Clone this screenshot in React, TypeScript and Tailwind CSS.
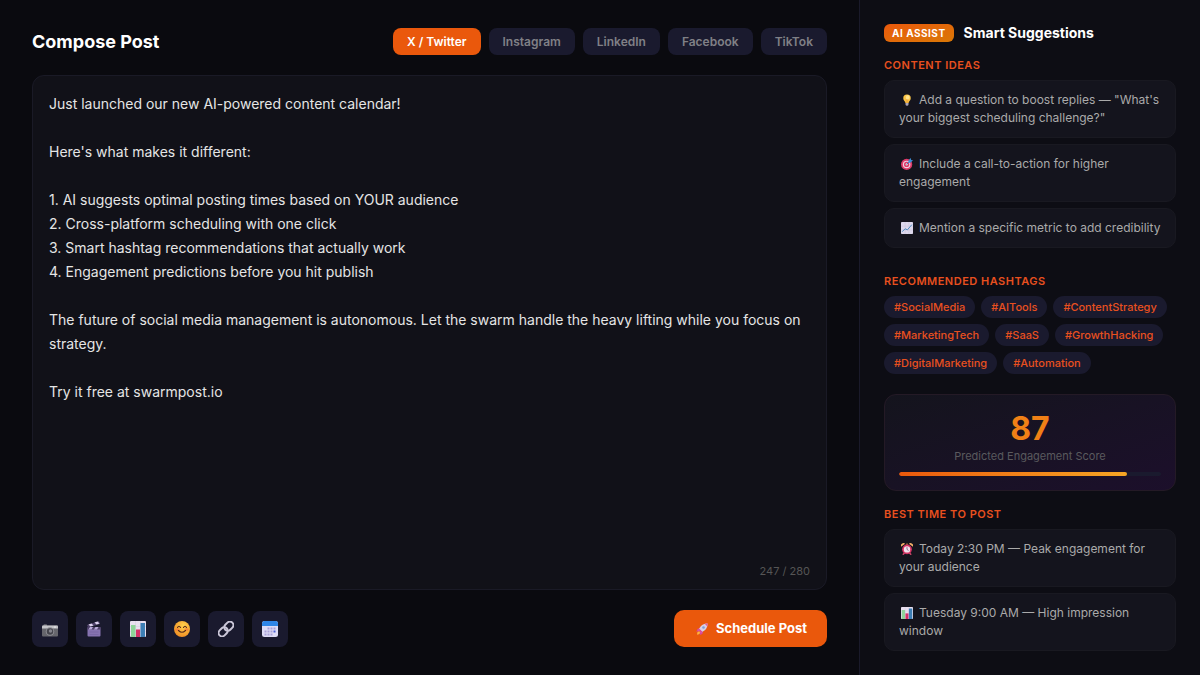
import React, { useState } from "react";
import clsx from "clsx";

interface IIconProps {
    className?: string
}

const CameraIcon: React.FC<IIconProps> = ({ className }) => (
    <svg viewBox="0 0 32 32" className={className} aria-hidden="true">
        <rect x="3" y="7" width="7" height="4" rx="1" fill="#8b8b92" />
        <rect x="0" y="9" width="32" height="22" rx="2" fill="#66666c" />
        <path d="M0 11a2 2 0 0 1 2-2h28a2 2 0 0 1 2 2v4H0z" fill="#c4c4c8" />
        <circle cx="16" cy="21" r="8.5" fill="#8f8f95" />
        <circle cx="16" cy="21" r="6.5" fill="#45454c" />
        <circle cx="17" cy="20" r="3.4" fill="#85858d" />
        <rect x="24" y="11" width="4" height="2" rx="1" fill="#f2f2f5" />
    </svg>
);

const ClapperIcon: React.FC<IIconProps> = ({ className }) => (
    <svg viewBox="0 0 32 32" className={className} aria-hidden="true">
        <rect x="3" y="12" width="26" height="19" rx="2" fill="#8673b0" />
        <rect x="3" y="12" width="26" height="5" fill="#4e4169" />
        <path d="M8 12h6l-3 5H5zM19 12h6l-3 5h-6z" fill="#b9aad8" />
        <path d="M2 8 26 0l2 6L4 13z" fill="#4e4169" />
        <path d="m5 7 6-2 4 4-6 2zM17 3l6-2 4 4-6 2z" fill="#ddd3f0" />
        <path d="M7 22h18M7 27h18" stroke="#7563a0" strokeWidth="1.4" />
    </svg>
);

const BarsIcon: React.FC<IIconProps> = ({ className }) => (
    <svg viewBox="0 0 32 32" className={className} aria-hidden="true">
        <rect x="0" y="0" width="32" height="32" rx="2" fill="#e9e0f0" />
        <path d="M0 11h32M0 21h32M11 0v32M21 0v32" stroke="#d3cadf" strokeWidth="1" />
        <rect x="2" y="8" width="9" height="24" fill="#8fd49a" />
        <rect x="12" y="17" width="8" height="15" fill="#d52f68" />
        <rect x="21" y="4" width="9" height="28" fill="#3d7fb5" />
    </svg>
);

const SmileIcon: React.FC<IIconProps> = ({ className }) => (
    <svg viewBox="0 0 32 32" className={className} aria-hidden="true">
        <defs>
            <radialGradient id="smile" cx="0.6" cy="0.3" r="0.75">
                <stop offset="0" stopColor="#ffd24d" />
                <stop offset="1" stopColor="#ef8b22" />
            </radialGradient>
        </defs>
        <circle cx="16" cy="16" r="16" fill="url(#smile)" />
        <ellipse cx="7" cy="17" rx="4" ry="3" fill="#f4703a" opacity=".6" />
        <ellipse cx="25" cy="17" rx="4" ry="3" fill="#f4703a" opacity=".6" />
        <path d="M7 13q3-5 6 0M19 13q3-5 6 0M9 19q7 7 14 0" fill="none" stroke="#57291a" strokeWidth="2.2" strokeLinecap="round" />
    </svg>
);

const LinkIcon: React.FC<IIconProps> = ({ className }) => (
    <svg viewBox="0 0 32 32" className={className} aria-hidden="true">
        <g fill="none" stroke="#cbc7d8" strokeWidth="4" transform="rotate(-45 16 16)">
            <rect x="-2" y="9" width="20" height="14" rx="7" />
            <rect x="14" y="9" width="20" height="14" rx="7" />
        </g>
    </svg>
);

const CalendarIcon: React.FC<IIconProps> = ({ className }) => (
    <svg viewBox="0 0 32 32" className={className} aria-hidden="true">
        <rect x="0" y="0" width="32" height="32" rx="5" fill="#dedcf5" />
        <path d="M0 10V5a5 5 0 0 1 5-5h22a5 5 0 0 1 5 5v5z" fill="#2f86e6" />
        <g fill="#a9a1d8">
            <path d="M11 13h4v4h-4zM17 13h4v4h-4zM23 13h4v4h-4zM5 19h4v4H5zM11 19h4v4h-4zM17 19h4v4h-4zM5 25h4v4H5zM11 25h4v4h-4zM17 25h4v4h-4z" />
        </g>
        <path d="M23 19h4v4h-4z" fill="#4b5fd0" />
    </svg>
);

const BulbIcon: React.FC<IIconProps> = ({ className }) => (
    <svg viewBox="0 0 32 32" className={className} aria-hidden="true">
        <path d="M16 1a10 10 0 0 0-10 10c0 6 5 7 6 13h8c1-6 6-7 6-13A10 10 0 0 0 16 1z" fill="#fbc546" />
        <ellipse cx="18" cy="9" rx="5" ry="6" fill="#ffe38c" />
        <path d="M14 24v-9l-2-2M18 24v-9l2-2" fill="none" stroke="#e8952c" strokeWidth="1.6" />
        <path d="M12 24h8v4a3 3 0 0 1-3 3h-2a3 3 0 0 1-3-3z" fill="#a9a3b8" />
    </svg>
);

const TargetIcon: React.FC<IIconProps> = ({ className }) => (
    <svg viewBox="0 0 32 32" className={className} aria-hidden="true">
        <circle cx="15" cy="17" r="15" fill="#dc3a68" />
        <circle cx="15" cy="17" r="10" fill="#f0cfe0" />
        <circle cx="15" cy="17" r="7" fill="#dc3a68" />
        <circle cx="15" cy="17" r="3" fill="#f0dfea" />
        <path d="m15 17 9-9" stroke="#3276b5" strokeWidth="2.4" />
        <path d="M20 6l6-6 1 5 5 1-6 6-6 1z" fill="#3d8fd8" />
    </svg>
);

const TrendIcon: React.FC<IIconProps> = ({ className }) => (
    <svg viewBox="0 0 32 32" className={className} aria-hidden="true">
        <rect x="0" y="0" width="32" height="32" rx="2" fill="#ddd8ec" />
        <path d="M0 11h32M0 21h32M11 0v32M21 0v32" stroke="#c5bed8" strokeWidth="1.2" />
        <path d="m3 26 8-8 6 3 12-14" fill="none" stroke="#4a8abf" strokeWidth="2.6" strokeLinejoin="round" />
    </svg>
);

const AlarmIcon: React.FC<IIconProps> = ({ className }) => (
    <svg viewBox="0 0 32 32" className={className} aria-hidden="true">
        <path d="M6 30l5-5M26 30l-5-5" stroke="#c9486a" strokeWidth="4" strokeLinecap="round" />
        <path d="M0 10a7 7 0 0 1 11-8zM32 10a7 7 0 0 0-11-8z" fill="#f3b06a" />
        <path d="M16 1v5" stroke="#f3a04a" strokeWidth="3" />
        <circle cx="16" cy="17" r="13" fill="#d83264" />
        <circle cx="16" cy="17" r="8.5" fill="#f3e3ee" />
        <path d="M16 11v6l4 3" fill="none" stroke="#6a4c73" strokeWidth="2" />
    </svg>
);

const RocketIcon: React.FC<IIconProps> = ({ className }) => (
    <svg viewBox="0 0 32 32" className={className} aria-hidden="true">
        <path d="M3 31c0-6 1-9 5-9l3 3c0 4-4 5-8 6z" fill="#ffb13d" />
        <path d="M12 13 4 15l-3 8 9-2zM19 21l-2 8-7 3 1-9z" fill="#d9469a" />
        <path d="M7 19C10 8 19 1 31 1c0 12-7 20-18 24z" fill="#d9cfe6" />
        <path d="M23 2c3-1 5-1 8-1 0 3 0 5-1 8z" fill="#e0609a" />
        <path d="m7 19 6 6 4-2-8-8z" fill="#d9469a" />
        <circle cx="20" cy="12" r="3.4" fill="#7f9fd6" />
    </svg>
);

const platforms = ["X / Twitter", "Instagram", "LinkedIn", "Facebook", "TikTok"];

const tools = [
    { label: "Add photo", Icon: CameraIcon },
    { label: "Add video", Icon: ClapperIcon },
    { label: "Add poll", Icon: BarsIcon },
    { label: "Add emoji", Icon: SmileIcon },
    { label: "Add link", Icon: LinkIcon },
    { label: "Pick a date", Icon: CalendarIcon },
];

const ideas = [
    { text: "Add a question to boost replies — \"What's your biggest scheduling challenge?\"", Icon: BulbIcon },
    { text: "Include a call-to-action for higher engagement", Icon: TargetIcon },
    { text: "Mention a specific metric to add credibility", Icon: TrendIcon },
];

const times = [
    { text: "Today 2:30 PM — Peak engagement for your audience", Icon: AlarmIcon },
    { text: "Tuesday 9:00 AM — High impression window", Icon: BarsIcon },
];

const hashtags = [
    "#SocialMedia",
    "#AITools",
    "#ContentStrategy",
    "#MarketingTech",
    "#SaaS",
    "#GrowthHacking",
    "#DigitalMarketing",
    "#Automation",
];

const draft = `Just launched our new AI-powered content calendar!

Here's what makes it different:

1. AI suggests optimal posting times based on YOUR audience
2. Cross-platform scheduling with one click
3. Smart hashtag recommendations that actually work
4. Engagement predictions before you hit publish

The future of social media management is autonomous. Let the swarm handle the heavy lifting while you focus on strategy.

Try it free at swarmpost.io`;

interface ISuggestionProps {
    text: string
    Icon: React.FC<IIconProps>
}

const Suggestion: React.FC<ISuggestionProps> = ({ text, Icon }) => (
    <li className="rounded-[10px] border border-[#191921] bg-[#14141d] px-3.5 py-2.5 text-[12px] leading-[18px] text-[#aaaaaa]">
        <Icon className="mr-1.5 ml-0.5 inline-block size-3 align-[-2px]" />
        {text}
    </li>
);

const SectionTitle: React.FC<{ children: React.ReactNode }> = ({ children }) => (
    <h3 className="mb-2 text-[11px] leading-[14px] font-semibold tracking-[0.5px] text-[#e8501f] uppercase">{children}</h3>
);

const App: React.FC = () => {
    const [platform, setPlatform] = useState(platforms[0]);
    const [post, setPost] = useState(draft);
    const score = 87;

    return (
        <div className="flex min-h-screen bg-[#0a0a0f] font-['Inter',sans-serif] text-white">
            <main className="flex min-w-0 flex-1 flex-col gap-5 border-r border-[#1a1a2a] px-8 py-7">
                <header className="flex items-center justify-between">
                    <h1 className="text-[18px] leading-[22px] font-bold">Compose Post</h1>
                    <div className="flex gap-2">
                        {platforms.map((name) => (
                            <button
                                key={name}
                                type="button"
                                onClick={() => setPlatform(name)}
                                className={clsx(
                                    "rounded-lg px-3.5 py-1.5 text-[12px] leading-[15px] font-semibold",
                                    name === platform ? "bg-[#ea580c] text-white" : "bg-[#1a1a2e] text-[#808086]"
                                )}
                            >
                                {name}
                            </button>
                        ))}
                    </div>
                </header>

                <div className="flex flex-1 flex-col rounded-xl border border-[#1a1a26] bg-[#111118] px-4 pt-4 pb-[11px]">
                    <textarea
                        aria-label="Post text"
                        value={post}
                        onChange={(e) => setPost(e.target.value)}
                        className="w-full flex-1 resize-none bg-transparent text-[14px] leading-6 text-[#e5e5e5] outline-none"
                    />
                    <p className="text-right text-[11px] leading-[14px] text-[#555555]">247 / 280</p>
                </div>

                <footer className="flex items-center justify-between">
                    <div className="flex gap-2">
                        {tools.map(({ label, Icon }) => (
                            <button
                                key={label}
                                type="button"
                                aria-label={label}
                                className="flex size-9 items-center justify-center rounded-lg bg-[#1a1a2e]"
                            >
                                <Icon className="size-4" />
                            </button>
                        ))}
                    </div>
                    <button
                        type="button"
                        className="flex items-center gap-2 rounded-[10px] bg-[#ea580c] px-5 py-2.5 text-[13px] leading-[17px] font-bold"
                    >
                        <RocketIcon className="ml-0.5 size-3" />
                        Schedule Post
                    </button>
                </footer>
            </main>

            <aside className="w-[340px] shrink-0 bg-[#0d0d14] p-6">
                <div className="mb-4 flex items-center gap-2.5">
                    <span className="rounded-md bg-linear-to-br from-[#ea580c] to-[#d97706] px-2 py-[3px] text-[10px] leading-3 font-bold tracking-[0.5px]">
                        AI ASSIST
                    </span>
                    <h2 className="text-[14px] leading-[18px] font-bold">Smart Suggestions</h2>
                </div>

                <section className="mb-[26px]">
                    <SectionTitle>Content Ideas</SectionTitle>
                    <ul className="flex flex-col gap-1.5">
                        {ideas.map((idea) => (
                            <Suggestion key={idea.text} {...idea} />
                        ))}
                    </ul>
                </section>

                <section className="mb-5">
                    <SectionTitle>Recommended Hashtags</SectionTitle>
                    <ul className="flex flex-wrap gap-1.5">
                        {hashtags.map((tag) => (
                            <li key={tag}>
                                <a href="#" className="block rounded-full bg-[#1a1a2e] px-2.5 py-1 text-[11px] leading-[14px] font-medium text-[#e8501f]">
                                    {tag}
                                </a>
                            </li>
                        ))}
                    </ul>
                </section>

                <section className="mb-4 rounded-xl border border-[#241a26] bg-linear-to-br from-[#14141d] to-[#1c0f2b] p-3.5 text-center">
                    <p className="text-[32px] leading-10 font-bold text-[#f08016]">{score}</p>
                    <p className="mb-2 text-[11px] leading-[15px] text-[#5a5a5e]">Predicted Engagement Score</p>
                    <div className="h-1 overflow-hidden rounded-full bg-[#1a1a2e]">
                        <div className="h-full rounded-full bg-linear-to-r from-[#ea580c] to-[#f5a524]" style={{ width: `${score}%` }} />
                    </div>
                </section>

                <section>
                    <SectionTitle>Best Time to Post</SectionTitle>
                    <ul className="flex flex-col gap-1.5">
                        {times.map((time) => (
                            <Suggestion key={time.text} {...time} />
                        ))}
                    </ul>
                </section>
            </aside>
        </div>
    );
};

export default App;
